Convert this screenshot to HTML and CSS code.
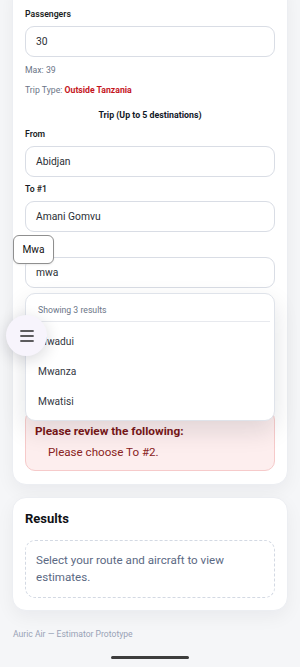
FILE: index.html
```html
<!DOCTYPE html>
<html lang="en">
<head>
<meta charset="utf-8">
<meta name="viewport" content="width=device-width, initial-scale=1">
<title>Auric Air — Estimator Prototype</title>
<link rel="stylesheet" href="styles.css">
</head>
<body>
<main class="page">
  <section class="card form-card">
    <div class="field">
      <label class="label">Passengers</label>
      <div class="input">30</div>
    </div>
    <p class="hint">Max: 39</p>
    <p class="hint trip-type">Trip Type: <strong class="danger">Outside Tanzania</strong></p>
    <h3 class="trip-title">Trip (Up to 5 destinations)</h3>

    <div class="field">
      <label class="label">From</label>
      <div class="input">Abidjan</div>
    </div>
    <div class="field">
      <label class="label">To #1</label>
      <div class="input">Amani Gomvu</div>
    </div>
    <div class="field field-open">
      <label class="label">To #2</label>
      <div class="input">mwa</div>
      <div class="chip">Mwa</div>
      <div class="dropdown">
        <div class="dropdown-head">Showing 3 results</div>
        <ul class="options">
          <li class="option">Mwadui</li>
          <li class="option">Mwanza</li>
          <li class="option">Mwatisi</li>
        </ul>
      </div>
    </div>

    <div class="alert">
      <p class="alert-title">Please review the following:</p>
      <ul class="alert-list">
        <li>Please choose To #2.</li>
      </ul>
    </div>
  </section>

  <section class="card results-card">
    <h2 class="results-title">Results</h2>
    <div class="empty">Select your route and aircraft to view estimates.</div>
  </section>

  <footer class="footer">Auric Air — Estimator Prototype</footer>
</main>

<button class="fab" aria-label="Menu">
  <svg width="14" height="12" viewBox="0 0 14 12" fill="none" stroke="#2a2a2a" stroke-width="1.4" stroke-linecap="round">
    <path d="M0.8 1h12.4M0.8 6h12.4M0.8 11h12.4"/>
  </svg>
</button>
<div class="home-indicator"></div>
</body>
</html>
```

FILE: styles.css
```css
* { box-sizing: border-box; }

html, body {
  margin: 0;
  padding: 0;
}

body {
  background: #f5f6f8;
  font-family: Roboto, "Liberation Sans", sans-serif;
  color: #111827;
  height: 667px;
  overflow: hidden;
}

.page {
  padding: 0 12px;
}

.card {
  background: #ffffff;
  border: 1px solid #eceef2;
  border-radius: 14px;
  box-shadow: 0 6px 18px rgba(15, 23, 42, 0.05);
}

.form-card {
  margin-top: -20px;
  padding: 26px 12px 13px;
}

.field {
  display: flex;
  flex-direction: column;
  gap: 5px;
  margin-bottom: 5.5px;
}

.field-open {
  position: relative;
}

.label {
  font-size: 8.7px;
  font-weight: 600;
  line-height: 14px;
  color: #1a1d23;
}

.input {
  height: 31px;
  border: 1px solid #d9dde5;
  border-radius: 9px;
  padding: 0 10px;
  display: flex;
  align-items: center;
  font-size: 10.3px;
  color: #2b2f36;
  background: #fff;
}

.hint {
  margin: 4px 0 0;
  font-size: 8.7px;
  line-height: 14px;
  color: #6b7587;
}

.trip-type {
  margin-top: 6px;
}

.danger {
  color: #c5161d;
  font-weight: 700;
}

.trip-title {
  margin: 11px 0 5px;
  text-align: center;
  font-size: 8.8px;
  line-height: 14px;
  font-weight: 700;
  color: #111827;
}

.chip {
  position: absolute;
  left: -12px;
  top: -3px;
  width: 41px;
  height: 29px;
  border: 1px solid #8f8f8f;
  border-radius: 6px;
  background: #fff;
  display: flex;
  align-items: center;
  justify-content: center;
  font-size: 10.2px;
  color: #111;
  box-shadow: 0 1px 2px rgba(0, 0, 0, 0.08);
}

.dropdown {
  position: absolute;
  left: 0;
  right: 0;
  top: 55px;
  height: 128px;
  background: #fff;
  border: 1px solid #dfe3ea;
  border-radius: 10px;
  box-shadow: 0 10px 24px rgba(15, 23, 42, 0.12);
  z-index: 5;
}

.dropdown-head {
  margin: 0 4px 0 12px;
  padding: 9px 0 4px;
  border-bottom: 1px solid #e7e9ee;
  font-size: 8.7px;
  line-height: 14px;
  color: #6b7587;
}

.options {
  list-style: none;
  margin: 0;
  padding: 5px 0 0;
}

.option {
  height: 30px;
  display: flex;
  align-items: center;
  padding: 0 12px;
  font-size: 10.2px;
  color: #333842;
}

.alert {
  margin-top: 122px;
  padding: 12px 9px 9px;
  background: #fdeeee;
  border: 1px solid #f6caca;
  border-radius: 10px;
  color: #7f1d1d;
}

.alert-title {
  margin: 0;
  font-size: 11.8px;
  line-height: 16px;
  font-weight: 700;
  color: #7a1616;
}

.alert-list {
  margin: 4px 0 0;
  padding-left: 13px;
  list-style: none;
  font-size: 11.6px;
  line-height: 18px;
  color: #8a2323;
}

.results-card {
  margin-top: 12px;
  padding: 12px 12px 12px;
}

.results-title {
  margin: 0 0 12px;
  font-size: 13px;
  line-height: 18px;
  font-weight: 700;
  color: #0f1115;
}

.empty {
  border: 1px dashed #d3d9e3;
  border-radius: 10px;
  padding: 11px 10px;
  font-size: 11.6px;
  line-height: 17px;
  color: #5b6983;
}

.footer {
  margin-top: 17px;
  padding-left: 1px;
  font-size: 8.6px;
  line-height: 12px;
  color: #98a2b6;
}

.fab {
  position: fixed;
  left: 6px;
  top: 315px;
  width: 41px;
  height: 41px;
  border-radius: 50%;
  border: none;
  background: #f7f4fc;
  box-shadow: 0 4px 16px rgba(20, 20, 40, 0.16);
  display: flex;
  align-items: center;
  justify-content: center;
  padding: 0;
  z-index: 10;
}

.home-indicator {
  position: fixed;
  left: 111px;
  top: 656px;
  width: 78px;
  height: 3px;
  border-radius: 2px;
  background: #3d3d3d;
  z-index: 10;
}
```
